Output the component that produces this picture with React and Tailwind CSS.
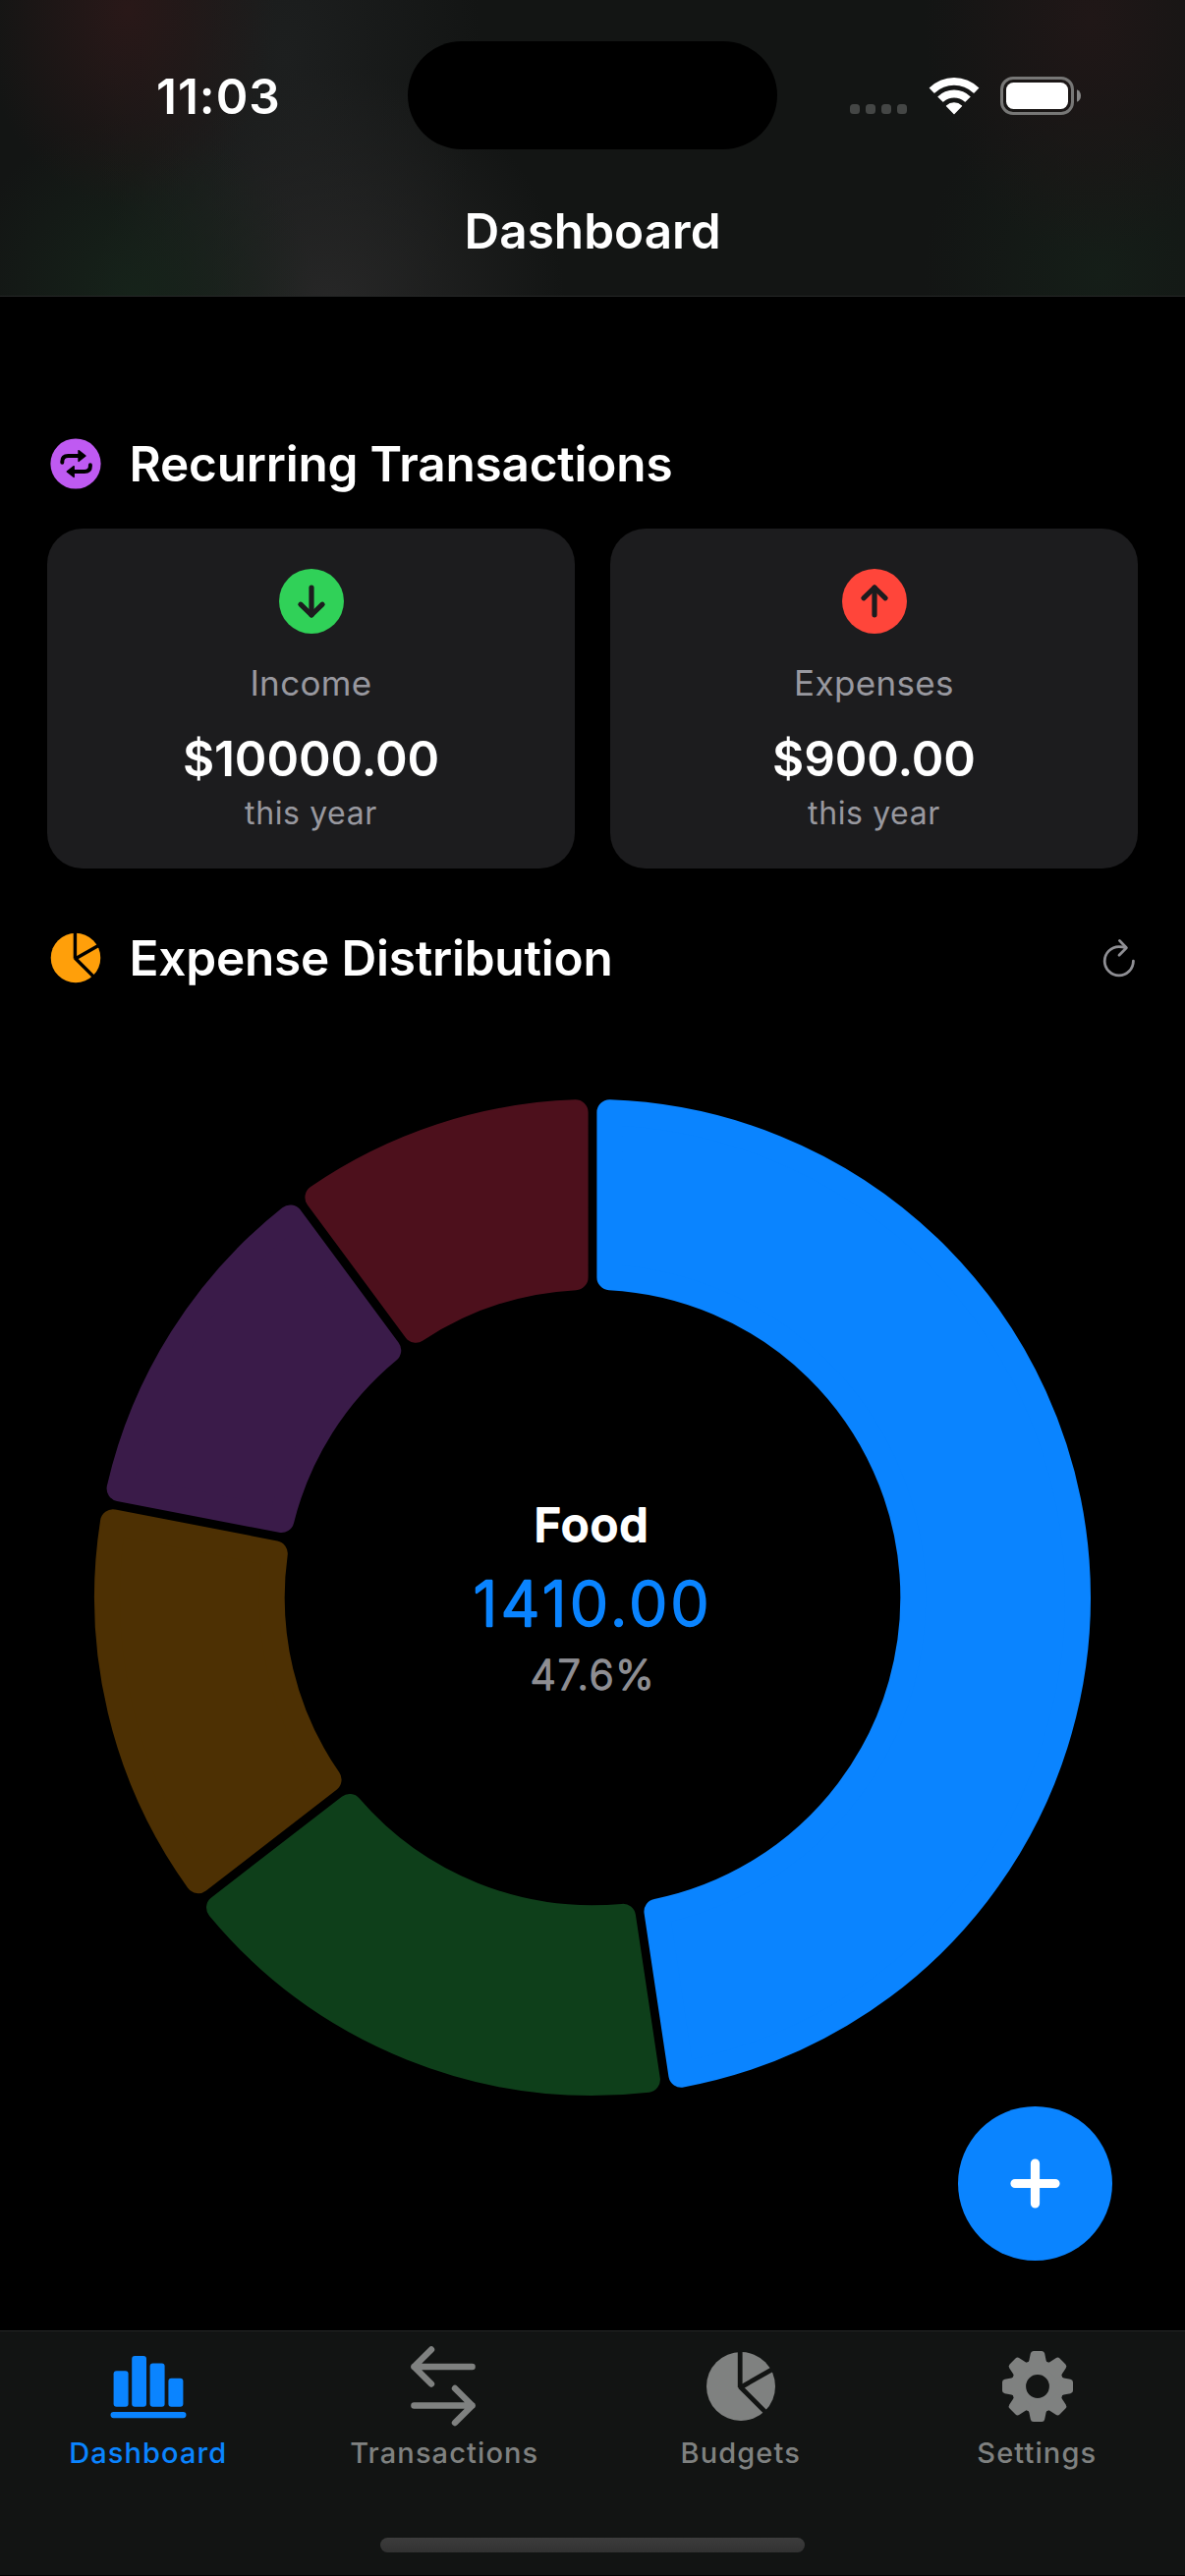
import React from "react";

const FONT = "font-['Inter',sans-serif]";

/* ---------- donut chart ---------- */
const OUTER = 507;
const INNER = 313.3;
const CORNER = 13;
const HALF_GAP = 4.4;

const SLICES = [
  { id: "blue", value: 1410, color: "#0a84ff", active: true },
  { id: "green", value: 500, color: "#30d158" },
  { id: "orange", value: 400, color: "#ff9f0a" },
  { id: "purple", value: 350, color: "#bf5af2" },
  { id: "pink", value: 300, color: "#ff375f" },
];

function slicePath(a0, a1) {
  const ro = OUTER - CORNER;
  const ri = INNER + CORNER;
  const d = HALF_GAP + CORNER;
  const pt = (r, a) =>
    `${(OUTER + r * Math.sin(a)).toFixed(2)} ${(OUTER - r * Math.cos(a)).toFixed(2)}`;
  const so = Math.asin(d / ro);
  const si = Math.asin(d / ri);
  const large = a1 - a0 > Math.PI ? 1 : 0;
  return `M${pt(ro, a0 + so)} A${ro} ${ro} 0 ${large} 1 ${pt(ro, a1 - so)} L${pt(ri, a1 - si)} A${ri} ${ri} 0 ${large} 0 ${pt(ri, a0 + si)} Z`;
}

function Donut() {
  const total = SLICES.reduce((s, x) => s + x.value, 0);
  let acc = 0;
  return (
    <svg className={`mx-auto mt-[118px] block overflow-visible ${FONT}`} width="1014" height="1014" viewBox="0 0 1014 1014">
      {SLICES.map((s) => {
        const a0 = (acc / total) * Math.PI * 2;
        acc += s.value;
        const a1 = (acc / total) * Math.PI * 2;
        return (
          <path key={s.id} d={slicePath(a0, a1)} fill={s.color} stroke={s.color} strokeWidth={CORNER * 2} strokeLinejoin="round" opacity={s.active ? 1 : 0.3} />
        );
      })}
      <g strokeLinejoin="round" strokeLinecap="round">
        <text x="447.5" y="449.5" fontSize="47" fontWeight="500" fill="#fff" stroke="#fff" strokeWidth="2" textLength="116" lengthAdjust="spacing">Food</text>
        <text x="385.5" y="536" fontSize="63" fontWeight="300" fill="#0a84ff" stroke="#0a84ff" strokeWidth="2.4" textLength="240" lengthAdjust="spacing">1410.00</text>
        <text x="443.5" y="600.5" fontSize="42" fontWeight="300" fill="#8e8e93" stroke="#8e8e93" strokeWidth="1.4" textLength="126" lengthAdjust="spacing">47.6%</text>
      </g>
    </svg>
  );
}

/* ---------- icons ---------- */
function WifiIcon() {
  return (
    <svg width="52" height="38" viewBox="0 0 52 38" fill="#fff">
      <path d="M0.6 10.6 A36 36 0 0 1 51.4 10.6 L46.6 15.6 Q46 16 45.5 15.5 A28.5 28.5 0 0 0 6.5 15.5 Q6 16 5.4 15.6 Z" />
      <path d="M9.2 19.4 A24 24 0 0 1 42.8 19.4 L37.7 24.6 Q37.2 25 36.7 24.6 A16 16 0 0 0 15.3 24.6 Q14.8 25 14.3 24.6 Z" />
      <path d="M18 28.4 A12 12 0 0 1 34 28.4 Q34.4 28.8 34 29.2 L26.5 37 Q26 37.5 25.5 37 L18 29.2 Q17.6 28.8 18 28.4 Z" />
    </svg>
  );
}

function BatteryIcon() {
  return (
    <svg width="83" height="40" viewBox="0 0 83 40">
      <rect x="1.5" y="1.5" width="72" height="36" rx="11.5" fill="none" stroke="#777776" strokeWidth="3" />
      <rect x="6" y="6" width="63" height="27" rx="7.5" fill="#fff" />
      <path d="M78 13.2 Q82 15 82 19.5 Q82 24 78 25.8 Z" fill="#868686" />
    </svg>
  );
}

function RepeatIcon() {
  return (
    <svg width="52" height="52" viewBox="0 0 52 52">
      <circle cx="26" cy="26" r="25.6" fill="#bf5af2" />
      <g fill="none" stroke="#000" strokeWidth="4" strokeLinecap="round" strokeLinejoin="round">
        <path d="M12.3 24.8 V23.8 Q12.3 18 18.3 18 H30" />
        <path d="M40.9 27.2 V28.2 Q40.9 34 34.9 34 H22" />
      </g>
      <g fill="#000" stroke="#000" strokeWidth="1.4" strokeLinejoin="round">
        <path d="M29 12.6 L36 18 L29 23.4 Z" />
        <path d="M24.2 28.6 L17.2 34 L24.2 39.4 Z" />
      </g>
    </svg>
  );
}

function PieIcon({ size, color, id }) {
  return (
    <svg width={size} height={size} viewBox="0 0 72 72">
      <mask id={id}>
        <circle cx="36" cy="36" r="35" fill="#fff" />
        <g stroke="#000" strokeWidth="4.8" fill="none">
          <path d="M35.2 -2 V37" />
          <path d="M35.2 37.4 L68 18.6" />
          <path d="M34.9 36 L64.5 65.6" />
        </g>
      </mask>
      <rect width="72" height="72" fill={color} mask={`url(#${id})`} />
    </svg>
  );
}

function ArrowBadge({ color, up }) {
  return (
    <svg width="66" height="66" viewBox="0 0 66 66">
      <circle cx="33" cy="33" r="33" fill={color} />
      <g transform={up ? "rotate(180 33 33)" : undefined} fill="none" stroke="#1c1c1e" strokeWidth="5.2" strokeLinecap="round" strokeLinejoin="round">
        <path d="M33 19.2 V46.8" />
        <path d="M21.9 36.2 L33 47 L44.1 36.2" />
      </g>
    </svg>
  );
}

function RefreshIcon() {
  return (
    <svg width="38" height="42" viewBox="0 0 38 42" fill="none" stroke="#8e8e93" strokeWidth="2.8" strokeLinecap="round" strokeLinejoin="round">
      <path d="M33.4 24.2 A14.6 14.6 0 1 1 18.8 9.6 Q22.6 9.6 25.6 10.6" />
      <path d="M19.4 3.4 L26.4 10.8 L19 18.2" />
    </svg>
  );
}

function BarsIcon() {
  return (
    <svg width="78" height="72" viewBox="0 0 78 72" fill="#0a84ff">
      <rect x="3.6" y="20.3" width="15" height="36.5" rx="3" />
      <rect x="22.2" y="5" width="14.8" height="51.8" rx="3" />
      <rect x="40.6" y="12.5" width="15" height="44.3" rx="3" />
      <rect x="59.4" y="27.8" width="15" height="29" rx="3" />
      <rect x="0.5" y="62" width="77" height="6.2" rx="3.1" />
    </svg>
  );
}

function SwapIcon() {
  return (
    <svg className="mr-[2px] overflow-visible" width="66" height="72" viewBox="0 0 66 72" fill="none" stroke="#7f8180" strokeWidth="6.4" strokeLinecap="round" strokeLinejoin="round">
      <path d="M62.6 16 H3.4 M21 -1.6 L3.4 16 L21 33.6" />
      <path d="M3.4 55.5 H62.6 M45 37.9 L62.6 55.5 L45 73.1" />
    </svg>
  );
}

function GearIcon() {
  return (
    <svg className="ml-[2px]" width="72" height="72" viewBox="-36 -36 72 72" fill="#7f8180">
      <circle r="19.2" fill="none" stroke="#7f8180" strokeWidth="14.6" />
      {[0, 45, 90, 135, 180, 225, 270, 315].map((a) => (
        <path key={a} transform={`rotate(${a})`} d="M-11 -24 Q-9 -24.6 -8.6 -26.6 L-7.2 -33.4 Q-6.7 -36 -4.2 -36 H4.2 Q6.7 -36 7.2 -33.4 L8.6 -26.6 Q9 -24.6 11 -24 L8 -19 H-8 Z" />
      ))}
    </svg>
  );
}

/* ---------- sections ---------- */
function Header() {
  return (
    <header className="h-[302px] shrink-0 border-b border-[#262727] bg-[#131514] bg-[radial-gradient(ellipse_150px_200px_at_130px_10px,#291818,transparent),radial-gradient(ellipse_180px_180px_at_140px_300px,#16231a,transparent),radial-gradient(ellipse_240px_240px_at_335px_310px,#272727,transparent),radial-gradient(ellipse_200px_340px_at_290px_60px,#1d1f1f,transparent),radial-gradient(ellipse_170px_240px_at_1110px_20px,#201717,transparent),radial-gradient(ellipse_180px_200px_at_1120px_280px,#151e18,transparent)]">
      <div className="flex h-[195px] items-start">
        <div className="flex w-[415px] justify-start pt-[68px] pl-[159px]">
          <span className="text-[49.5px] leading-[60px] font-semibold tracking-[1px] whitespace-nowrap">11:03</span>
        </div>
        <div className="mt-[42px] h-[110px] w-[376px] rounded-full bg-black" />
        <div className="flex flex-1 items-end pt-[78px] pl-[74px]">
          <div className="flex gap-1.5 pb-[2px]">
            {[0, 1, 2, 3].map((i) => (
              <span key={i} className="size-2.5 rounded-[3.5px] bg-[#444645]" />
            ))}
          </div>
          <div className="ml-[22px] pb-px"><WifiIcon /></div>
          <div className="ml-[21px]"><BatteryIcon /></div>
        </div>
      </div>
      <h1 className="mt-[10px] text-center text-[49.5px] leading-[60px] font-semibold">Dashboard</h1>
    </header>
  );
}

function SectionTitle({ icon, title, children }) {
  return (
    <div className="flex h-[52px] items-center">
      {icon}
      <h2 className="ml-[28.5px] flex-1 text-[49.5px] leading-[52px] font-semibold tracking-[-0.2px] whitespace-nowrap">{title}</h2>
      {children}
    </div>
  );
}

function StatCard({ icon, label, amount }) {
  return (
    <div className="flex h-[346px] flex-col items-center rounded-[36px] bg-[#1c1c1e] pt-[41px]">
      {icon}
      <div className="mt-[25px] text-[35px] leading-[50px] tracking-[0.35px] text-[#98989f]">{label}</div>
      <div className="mt-[22px] text-[49.5px] leading-[60px] font-semibold tracking-[-0.1px]">{amount}</div>
      <div className="mt-[6px] text-[32px] leading-[40px] tracking-[0.6px] text-[#98989f]">this year</div>
    </div>
  );
}

function Tab({ icon, label, active }) {
  return (
    <div className="flex flex-1 flex-col items-center pt-[20px]">
      {icon}
      <span className={`mt-[14px] text-[29px] leading-[36px] font-medium tracking-[1.1px] ${active ? "text-[#0a84ff]" : "text-[#7f8180]"}`}>{label}</span>
    </div>
  );
}

export default function App() {
  return (
    <div className={`relative flex h-[2622px] w-[1206px] flex-col overflow-hidden bg-black text-white ${FONT}`}>
      <Header />
      <main className="flex-1 px-[48px] pt-[144px]">
        <div className="pl-[3px]">
          <SectionTitle icon={<RepeatIcon />} title="Recurring Transactions" />
        </div>
        <div className="mt-[40px] grid grid-cols-2 gap-9">
          <StatCard icon={<ArrowBadge color="#30d158" />} label="Income" amount="$10000.00" />
          <StatCard icon={<ArrowBadge color="#ff453a" up />} label="Expenses" amount="$900.00" />
        </div>
        <div className="mt-[65px] pl-[3px]">
          <SectionTitle icon={<PieIcon id="pie-orange" size={52} color="#ff9f0a" />} title="Expense Distribution">
            <RefreshIcon />
          </SectionTitle>
        </div>
        <Donut />
      </main>
      <nav className="mb-px flex h-[249px] shrink-0 flex-col border-t border-[#262727] bg-[#121413]">
        <div className="flex">
          <Tab icon={<BarsIcon />} label="Dashboard" active />
          <Tab icon={<SwapIcon />} label="Transactions" />
          <Tab icon={<PieIcon id="pie-grey" size={72} color="#7f8180" />} label="Budgets" />
          <Tab icon={<GearIcon />} label="Settings" />
        </div>
        <div className="mx-auto mt-[68px] h-[15px] w-[432px] rounded-full bg-linear-to-b from-[#3c3c3c] to-[#323232]" />
      </nav>
      <button className="absolute right-[74px] bottom-[321px] flex size-[157px] items-center justify-center rounded-full bg-[#0a84ff]" aria-label="Add">
        <svg width="51" height="51" viewBox="0 0 51 51" stroke="#fff" strokeWidth="9.2" strokeLinecap="round">
          <path d="M25.5 5 V46 M5 25.5 H46" />
        </svg>
      </button>
    </div>
  );
}
